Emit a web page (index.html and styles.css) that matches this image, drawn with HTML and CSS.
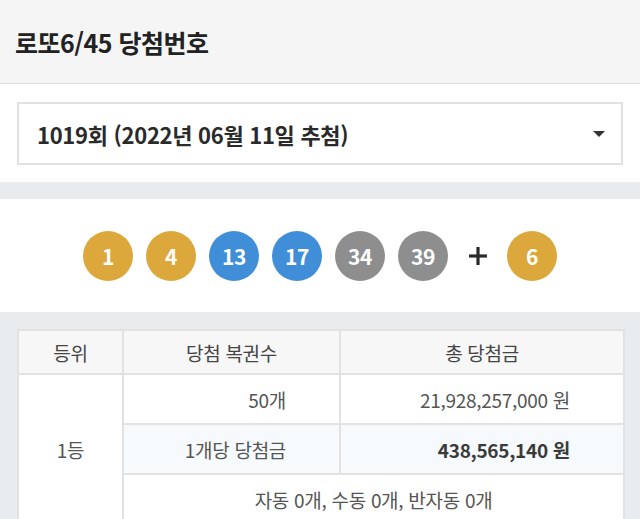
FILE: index.html
```html
<!DOCTYPE html>
<html lang="ko">
<head>
<meta charset="utf-8">
<title>로또6/45 당첨번호</title>
<link rel="stylesheet" href="styles.css">
</head>
<body>
<header class="page-header">
  <h1 class="page-title">로또6/45 당첨번호</h1>
</header>
<section class="select-section">
  <div class="round-select">
    <span class="round-label">1019회 (2022년 06월 11일 추첨)</span>
    <svg class="caret" width="12" height="6" viewBox="0 0 12 6"><polygon points="0,0 12,0 6,6" fill="#333"/></svg>
  </div>
</section>
<section class="balls-section">
  <div class="balls">
    <span class="ball ball-yellow">1</span>
    <span class="ball ball-yellow">4</span>
    <span class="ball ball-blue">13</span>
    <span class="ball ball-blue">17</span>
    <span class="ball ball-gray">34</span>
    <span class="ball ball-gray">39</span>
    <span class="plus"><svg width="18" height="18" viewBox="0 0 18 18"><rect x="7.4" y="0" width="3.2" height="18" fill="#2b2b2b"/><rect x="0" y="7.4" width="18" height="3.2" fill="#2b2b2b"/></svg></span>
    <span class="ball ball-yellow">6</span>
  </div>
</section>
<section class="table-section">
  <table class="prize-table">
    <colgroup>
      <col class="col-rank">
      <col class="col-count">
      <col class="col-amount">
    </colgroup>
    <thead>
      <tr>
        <th>등위</th>
        <th>당첨 복권수</th>
        <th>총 당첨금</th>
      </tr>
    </thead>
    <tbody>
      <tr>
        <td rowspan="3" class="rank">1등</td>
        <td class="num">50개</td>
        <td class="num">21,928,257,000 원</td>
      </tr>
      <tr class="highlight">
        <td class="num">1개당 당첨금</td>
        <td class="num strong">438,565,140 원</td>
      </tr>
      <tr>
        <td colspan="2" class="detail">자동 0개, 수동 0개, 반자동 0개</td>
      </tr>
    </tbody>
  </table>
</section>
</body>
</html>
```
FILE: styles.css
```css
* { box-sizing: border-box; }
html, body {
  margin: 0;
  padding: 0;
}
body {
  font-family: "Noto Sans CJK KR", "Noto Sans", sans-serif;
  color: #333;
  background: #e9ecee;
  overflow: hidden;
}
.page-header {
  height: 84px;
  background: #f5f5f5;
  border-bottom: 1px solid #dcdcdc;
  display: flex;
  align-items: center;
  padding-left: 15px;
}
.page-title {
  margin: 0;
  font-size: 25px;
  font-weight: 700;
  color: #222;
  letter-spacing: -0.5px;
}
.select-section {
  background: #fff;
  padding: 18px 17px 17px;
}
.round-select {
  height: 63px;
  border: 2px solid #e1e1e1;
  display: flex;
  align-items: center;
  justify-content: space-between;
  padding: 0 16px 0 18px;
}
.round-label {
  font-size: 22px;
  font-weight: 700;
  color: #2a2a2a;
  letter-spacing: -0.3px;
}
.caret { display: block; }
.balls-section {
  background: #fff;
  margin-top: 17px;
  height: 113px;
  display: flex;
  align-items: center;
  justify-content: center;
}
.balls {
  display: flex;
  align-items: center;
  gap: 13px;
}
.ball {
  width: 50px;
  height: 50px;
  border-radius: 50%;
  display: flex;
  align-items: center;
  justify-content: center;
  color: #fff;
  font-size: 21px;
  font-weight: 700;
  letter-spacing: -0.5px;
}
.ball-yellow { background: #dca83c; }
.ball-blue { background: #418ed8; }
.ball-gray { background: #8e8e8e; }
.plus {
  width: 28px;
  display: flex;
  justify-content: center;
  margin: 0 2px 0 3px;
}
.table-section {
  padding: 17px 17px 0;
}
.prize-table {
  width: 606px;
  border-collapse: collapse;
  table-layout: fixed;
  background: #fff;
  font-size: 19px;
  color: #555;
}
.col-rank { width: 105px; }
.col-count { width: 217px; }
.col-amount { width: 284px; }
.prize-table th,
.prize-table td {
  border: 2px solid #e2e2e2;
  padding: 0;
  letter-spacing: -0.3px;
}
.prize-table th {
  height: 44px;
  background: #f7f7f7;
  font-weight: 400;
  color: #444;
}
.prize-table td {
  height: 50px;
}
.prize-table .rank {
  text-align: center;
}
.prize-table .num {
  text-align: right;
  padding-right: 53px;
}
.prize-table .highlight td {
  background: #f6fafd;
}
.prize-table .strong {
  font-weight: 700;
  color: #3a3a3a;
}
.prize-table .detail {
  text-align: center;
}
```
